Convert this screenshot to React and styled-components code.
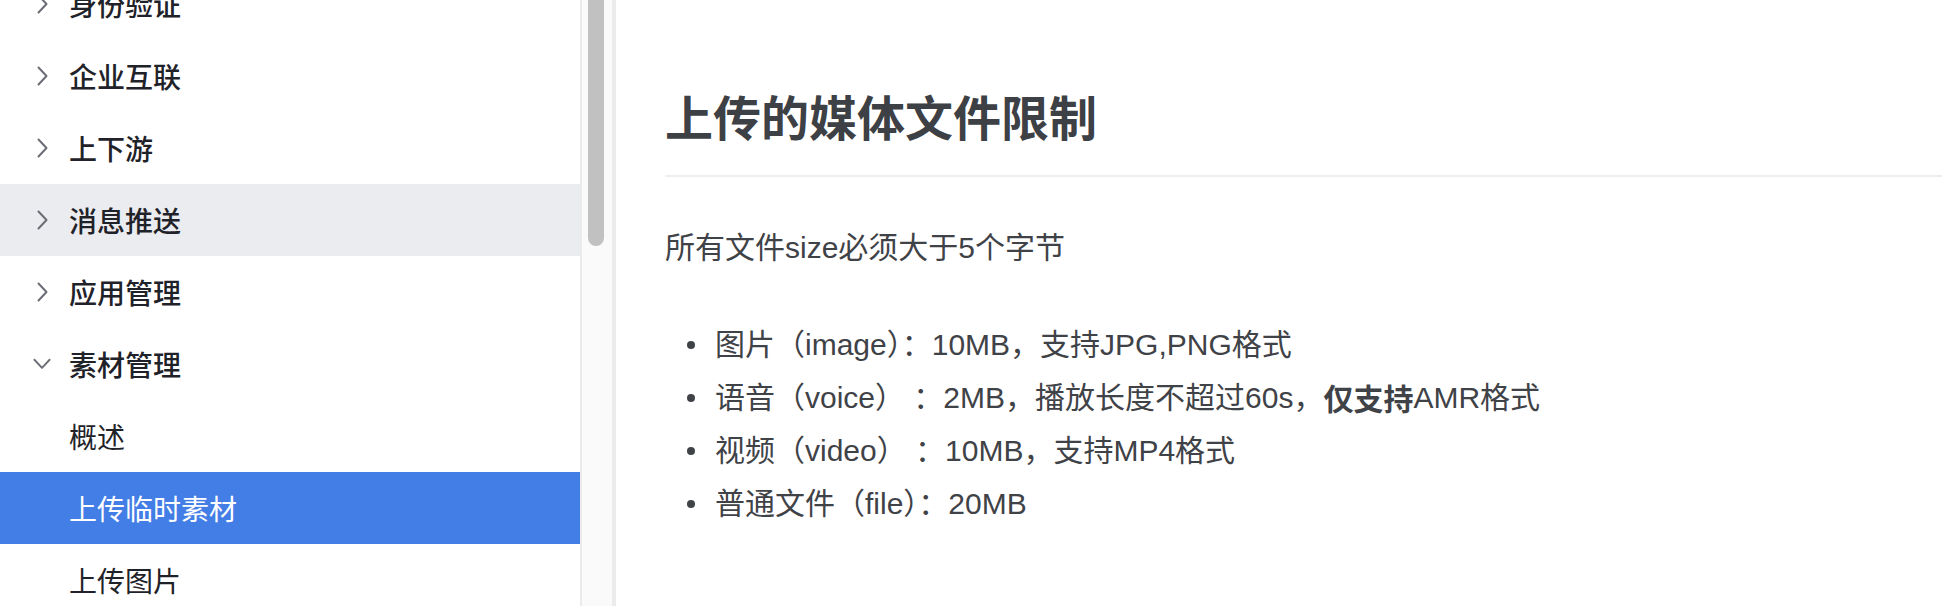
import React from 'react';
import styled, { createGlobalStyle } from 'styled-components';

const GlobalStyle = createGlobalStyle`
  html, body {
    margin: 0;
    padding: 0;
    background: #ffffff;
    overflow: hidden;
  }
  body {
    font-family: "Liberation Sans", "Noto Sans CJK SC", sans-serif;
  }
`;

const Page = styled.div`
  display: flex;
  width: 1942px;
  height: 606px;
  overflow: hidden;
`;

const Sidebar = styled.nav`
  width: 580px;
  flex-shrink: 0;
  height: 606px;
  overflow: hidden;
`;

const MenuList = styled.ul`
  list-style: none;
  margin: -32px 0 0;
  padding: 0;
`;

const MenuItem = styled.li`
  display: flex;
  align-items: center;
  height: 72px;
  padding-left: ${(p) => (p.$child ? '69px' : '33px')};
  font-family: "Noto Sans CJK SC", sans-serif;
  font-size: 28px;
  font-weight: ${(p) => (p.$child ? 400 : 500)};
  color: ${(p) => (p.$active ? '#ffffff' : '#1f2329')};
  background: ${(p) => (p.$active ? '#437de6' : p.$hover ? '#ebecf0' : 'transparent')};
`;

const Arrow = styled.span`
  display: flex;
  justify-content: center;
  align-items: center;
  width: 18px;
  margin-right: 18px;
  color: #6b6e74;
`;

const ScrollTrack = styled.div`
  width: 26px;
  flex-shrink: 0;
  height: 606px;
  background: #fafafa;
  border-left: 2px solid #ebebeb;
  border-right: 4px solid #ececec;
  display: flex;
  justify-content: center;
  padding-right: 4px;
  box-sizing: content-box;
`;

const ScrollThumb = styled.div`
  width: 16px;
  height: 246px;
  margin-left: 2px;
  background: #c1c1c1;
  border-radius: 0 0 8px 8px;
`;

const Content = styled.main`
  flex: 1;
  padding: 79px 0 0 49px;
  color: #3f4247;
`;

const Title = styled.h1`
  margin: 0;
  font-family: "Noto Sans CJK SC", sans-serif;
  font-size: 48px;
  line-height: 72px;
  font-weight: 700;
  color: #3d4044;
  padding-bottom: 24px;
  border-bottom: 2px solid #eeeeee;
`;

const Paragraph = styled.p`
  margin: 45px 0 0;
  font-size: 30px;
  line-height: 52px;
`;

const Bullets = styled.ul`
  list-style: none;
  margin: 44px 0 0;
  padding: 0 0 0 22px;
`;

const Bullet = styled.li`
  display: flex;
  align-items: center;
  font-size: 30px;
  line-height: 53px;

  &::before {
    content: '';
    width: 8px;
    height: 8px;
    border-radius: 50%;
    background: #3f4247;
    margin-right: 20px;
    flex-shrink: 0;
  }

  b {
    font-weight: 700;
    font-family: "Noto Sans CJK SC", sans-serif;
  }
`;

const ChevronRight = () => (
  <svg width="11" height="20" viewBox="0 0 11 20" fill="none">
    <polyline points="1.5,1.5 9.5,10 1.5,18.5" stroke="currentColor" strokeWidth="2" strokeLinecap="round" strokeLinejoin="round" />
  </svg>
);

const ChevronDown = () => (
  <svg width="19" height="12" viewBox="0 0 19 12" fill="none">
    <polyline points="1.5,1.5 9.5,10 17.5,1.5" stroke="currentColor" strokeWidth="2" strokeLinecap="round" strokeLinejoin="round" />
  </svg>
);

const menu = [
  { label: '身份验证' },
  { label: '企业互联' },
  { label: '上下游' },
  { label: '消息推送', hover: true },
  { label: '应用管理' },
  { label: '素材管理', open: true },
  { label: '概述', child: true },
  { label: '上传临时素材', child: true, active: true },
  { label: '上传图片', child: true },
];

export default function App() {
  return (
    <>
      <GlobalStyle />
      <Page>
        <Sidebar>
          <MenuList>
            {menu.map((item) => (
              <MenuItem
                key={item.label}
                $child={item.child}
                $active={item.active}
                $hover={item.hover}
              >
                {!item.child && (
                  <Arrow>{item.open ? <ChevronDown /> : <ChevronRight />}</Arrow>
                )}
                {item.label}
              </MenuItem>
            ))}
          </MenuList>
        </Sidebar>
        <ScrollTrack>
          <ScrollThumb />
        </ScrollTrack>
        <Content>
          <Title>上传的媒体文件限制</Title>
          <Paragraph>所有文件size必须大于5个字节</Paragraph>
          <Bullets>
            <Bullet>图片（image）：10MB，支持JPG,PNG格式</Bullet>
            <Bullet>
              语音（voice） ：2MB，播放长度不超过60s，<b>仅支持</b>AMR格式
            </Bullet>
            <Bullet>视频（video） ：10MB，支持MP4格式</Bullet>
            <Bullet>普通文件（file）：20MB</Bullet>
          </Bullets>
        </Content>
      </Page>
    </>
  );
}
